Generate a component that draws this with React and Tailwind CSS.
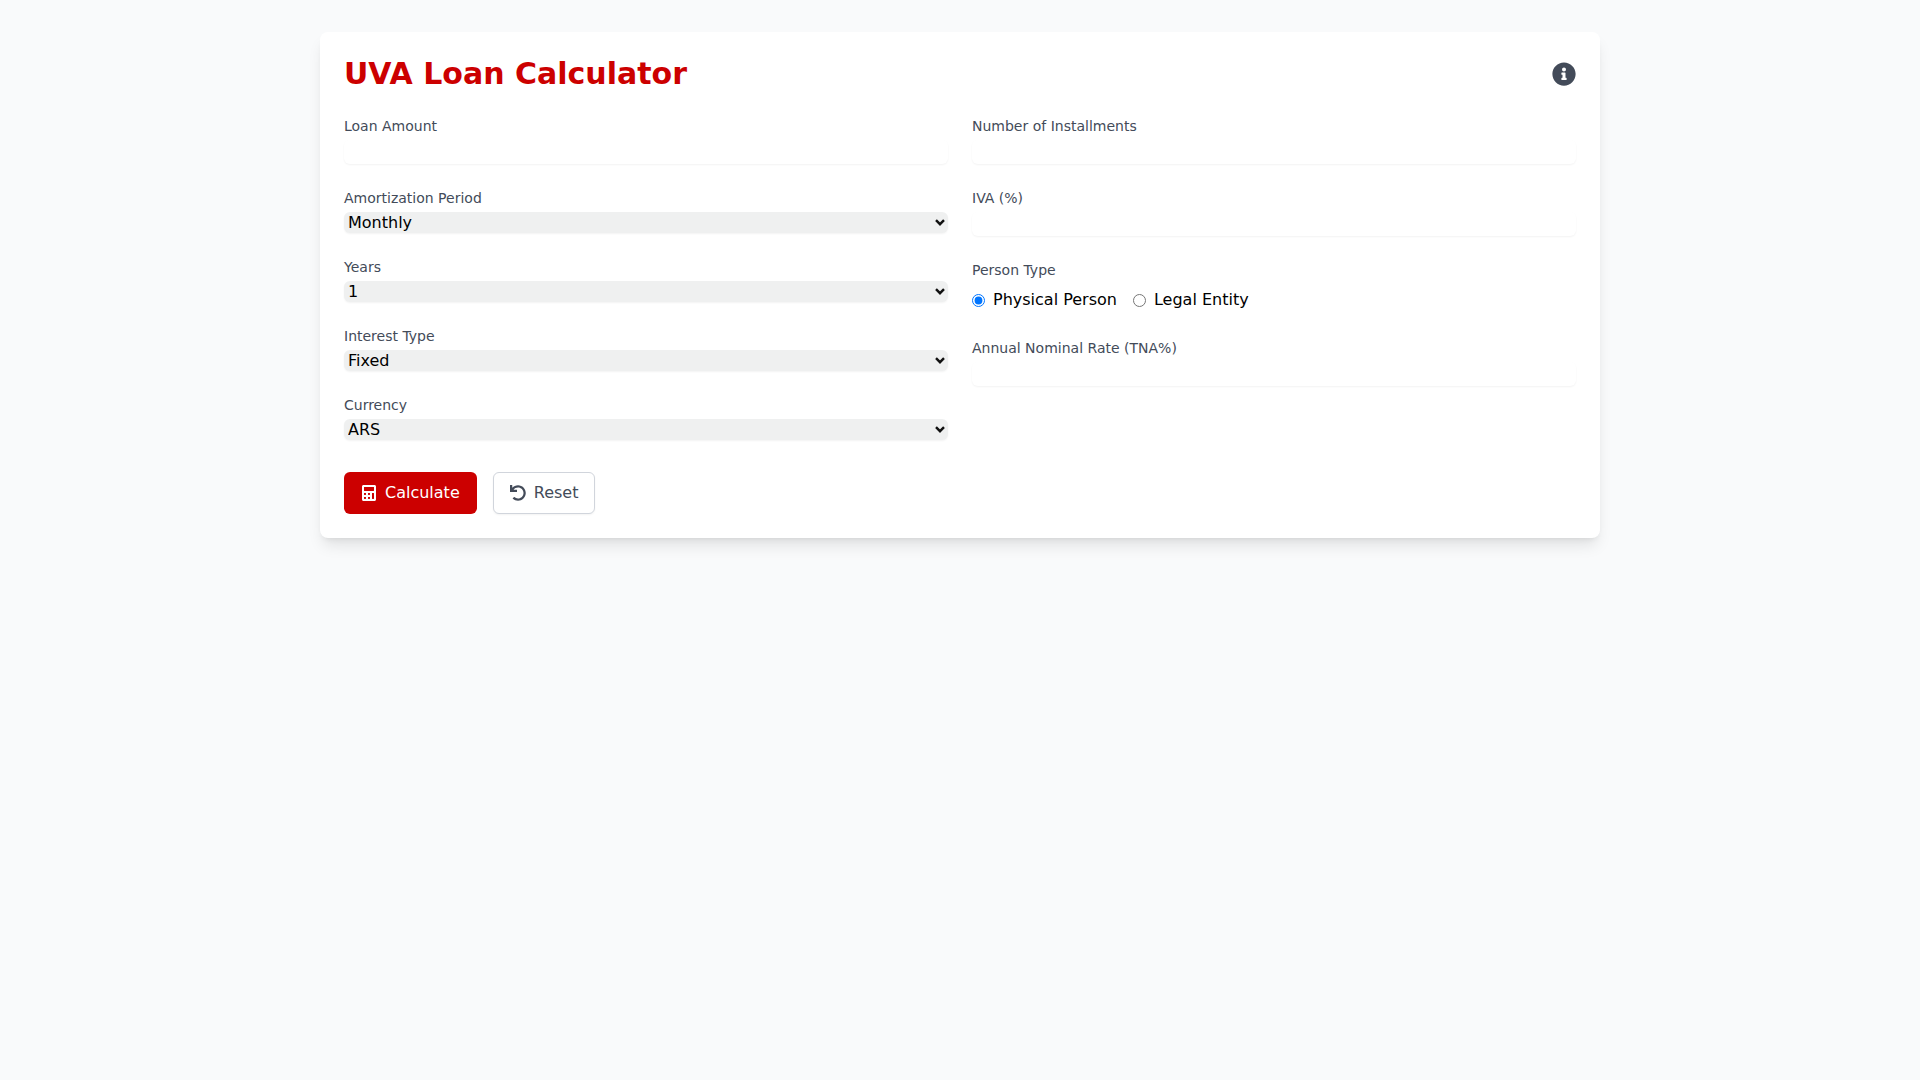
import React from "react";
import { FaCalculator, FaUndo, FaInfoCircle } from "react-icons/fa";

function TextField({ label }) {
  return (
    <div>
      <label className="block text-sm text-[#434b59] mb-1">{label}</label>
      <input type="text" className="block w-full h-6 rounded-md shadow-xs outline-none" />
    </div>
  );
}

function SelectField({ label, options }) {
  return (
    <div>
      <label className="block text-sm text-[#434b59] mb-1">{label}</label>
      <div className="relative">
        <select className="block w-full h-[21px] pl-1 leading-[21px] appearance-none rounded-md shadow-xs bg-[#eff0f0] text-black">
          {options.map((o) => (
            <option key={o}>{o}</option>
          ))}
        </select>
        <svg className="absolute right-[3px] top-[7px] pointer-events-none" width="10" height="7" viewBox="0 0 10 7" fill="none">
          <path d="M1 1.2 5 5.2 9 1.2" stroke="#111111" strokeWidth="2.4" />
        </svg>
      </div>
    </div>
  );
}

export default function App() {
  return (
    <div className="min-h-screen bg-gray-50 font-['DejaVu_Sans',sans-serif]">
      <div className="w-[1280px] mx-auto pt-8">
        <div className="bg-white rounded-lg shadow-lg p-6">
          <div className="flex items-center justify-between mb-6">
            <h1 className="text-3xl font-bold text-[#cc0000]">UVA Loan Calculator</h1>
            <button type="button" className="text-[#434b59]">
              <FaInfoCircle size={24} />
            </button>
          </div>
          <div className="grid grid-cols-2 gap-6">
            <div className="flex flex-col gap-6">
              <TextField label="Loan Amount" />
              <SelectField label="Amortization Period" options={["Monthly", "Quarterly", "Yearly"]} />
              <SelectField label="Years" options={["1", "2", "3", "5", "10"]} />
              <SelectField label="Interest Type" options={["Fixed", "Variable"]} />
              <SelectField label="Currency" options={["ARS", "USD"]} />
            </div>
            <div className="flex flex-col gap-6">
              <TextField label="Number of Installments" />
              <TextField label="IVA (%)" />
              <div>
                <label className="block text-sm text-[#434b59] mb-2">Person Type</label>
                <div className="flex items-center gap-4 text-black pb-0.5">
                  <label className="flex items-center gap-2">
                    <input type="radio" name="person" defaultChecked />
                    <span>Physical Person</span>
                  </label>
                  <label className="flex items-center gap-2">
                    <input type="radio" name="person" />
                    <span>Legal Entity</span>
                  </label>
                </div>
              </div>
              <TextField label="Annual Nominal Rate (TNA%)" />
            </div>
          </div>
          <div className="flex gap-4 mt-8">
            <button type="button" className="flex items-center gap-2 px-4 py-2 border border-transparent rounded-md bg-[#cc0000] text-white">
              <FaCalculator size={16} />
              <span>Calculate</span>
            </button>
            <button type="button" className="flex items-center gap-2 px-4 py-2 border border-gray-300 rounded-md shadow-xs bg-white text-[#434b59]">
              <FaUndo size={16} />
              <span>Reset</span>
            </button>
          </div>
        </div>
      </div>
    </div>
  );
}
